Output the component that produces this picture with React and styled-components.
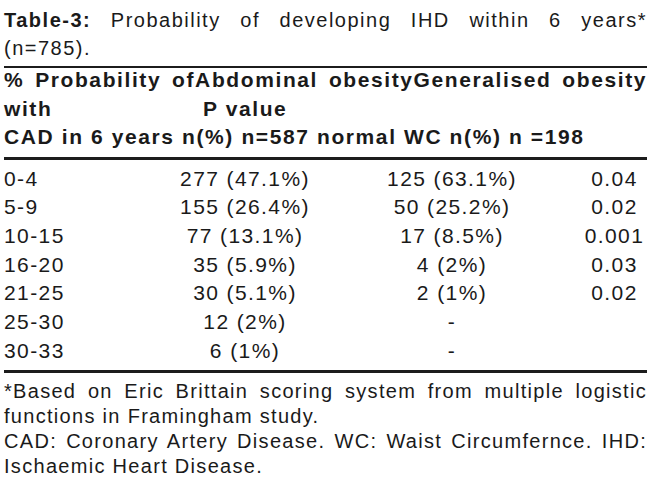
import React from "react";
import styled, { createGlobalStyle } from "styled-components";

const GlobalStyle = createGlobalStyle`
  body {
    margin: 0;
    background: #ffffff;
  }
`;

const Page = styled.div`
  width: 650px;
  box-sizing: border-box;
  padding: 6px 3px 0 4px;
  font-family: "Liberation Sans", Arial, sans-serif;
  color: #1a1a1a;
`;

const Caption = styled.div`
  font-size: 20px;
  line-height: 28px;
  letter-spacing: 1.5px;
`;

const Line = styled.div`
  text-align: ${props => (props.$justify ? "justify" : "left")};
  text-align-last: ${props => (props.$justify ? "justify" : "auto")};
`;

const Bold = styled.b`
  font-weight: 700;
`;

const Rule = styled.div`
  height: ${props => props.$weight}px;
  background: #1c1c1c;
  margin-top: ${props => props.$gap}px;
`;

const Head = styled.div`
  font-size: 21px;
  font-weight: 700;
  line-height: 28.5px;
  letter-spacing: 1.6px;
  margin-top: -2px;
`;

const HeadRow = styled.div`
  display: flex;
`;

const HeadCell = styled.span`
  width: ${props => props.$width || "auto"};
`;

const Rows = styled.div`
  display: grid;
  grid-template-columns: 146px 190px 224px 1fr;
  margin-top: 5px;
  font-size: 21px;
  line-height: 28.7px;
  letter-spacing: 1.4px;
`;

const Cell = styled.div`
  text-align: ${props => props.$align || "center"};
  padding-left: ${props => props.$pl || 0}px;
  padding-right: ${props => props.$pr || 0}px;
`;

const Notes = styled.div`
  margin-top: 6px;
  font-size: 20px;
  line-height: 25px;
  letter-spacing: 1.3px;
`;

const data = [
  ["0-4", "277 (47.1%)", "125 (63.1%)", "0.04"],
  ["5-9", "155 (26.4%)", "50 (25.2%)", "0.02"],
  ["10-15", "77 (13.1%)", "17 (8.5%)", "0.001"],
  ["16-20", "35 (5.9%)", "4 (2%)", "0.03"],
  ["21-25", "30 (5.1%)", "2 (1%)", "0.02"],
  ["25-30", "12 (2%)", "-", ""],
  ["30-33", "6 (1%)", "-", ""],
];

function App() {
  return (
    <>
      <GlobalStyle />
      <Page>
        <Caption>
          <Line $justify>
            <Bold>Table-3:</Bold> Probability of developing IHD within 6 years*
          </Line>
          <Line>(n=785).</Line>
        </Caption>

        <Rule $weight={2} $gap={4} />

        <Head>
          <Line $justify>% Probability ofAbdominal obesityGeneralised obesity</Line>
          <HeadRow>
            <HeadCell $width="199px">with</HeadCell>
            <HeadCell>P value</HeadCell>
          </HeadRow>
          <Line>CAD in 6 years n(%) n=587 normal WC n(%) n =198</Line>
        </Head>

        <Rule $weight={3} $gap={5} />

        <Rows>
          {data.map(row => (
            <React.Fragment key={row[0]}>
              <Cell $align="left">{row[0]}</Cell>
              <Cell>{row[1]}</Cell>
              <Cell>{row[2]}</Cell>
              <Cell $pl={20} $pr={2}>{row[3]}</Cell>
            </React.Fragment>
          ))}
        </Rows>

        <Rule $weight={3} $gap={5} />

        <Notes>
          <Line $justify>*Based on Eric Brittain scoring system from multiple logistic</Line>
          <Line>functions in Framingham study.</Line>
          <Line $justify>CAD: Coronary Artery Disease. WC: Waist Circumfernce. IHD:</Line>
          <Line>Ischaemic Heart Disease.</Line>
        </Notes>
      </Page>
    </>
  );
}

export default App;
